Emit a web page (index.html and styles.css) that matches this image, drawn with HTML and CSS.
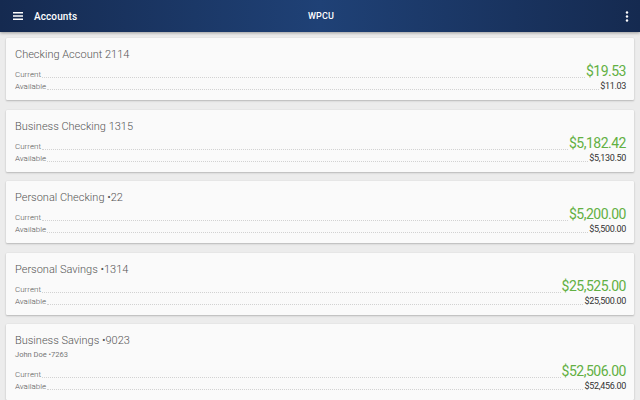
FILE: index.html
```html
<!DOCTYPE html>
<html>
<head>
<meta charset="utf-8">
<link rel="stylesheet" href="styles.css">
</head>
<body>
<header class="appbar">
  <div class="left">
    <svg class="menu" width="10" height="8" viewBox="0 0 10 8"><rect x="0" y="0" width="10" height="1.5" fill="#fff"/><rect x="0" y="3.25" width="10" height="1.5" fill="#fff"/><rect x="0" y="6.5" width="10" height="1.5" fill="#fff"/></svg>
    <span class="title">Accounts</span>
  </div>
  <span class="brand">WPCU</span>
  <div class="right">
    <svg class="kebab" width="4" height="11" viewBox="0 0 4 11"><circle cx="2" cy="1.5" r="1.2" fill="#fff"/><circle cx="2" cy="5.5" r="1.2" fill="#fff"/><circle cx="2" cy="9.5" r="1.2" fill="#fff"/></svg>
  </div>
</header>
<main class="list">
  <section class="card">
    <div class="name">Checking Account 2114</div>
    <div class="row cur"><span class="lbl">Current</span><span class="dots"></span><span class="amt">$19.53</span></div>
    <div class="row avl"><span class="lbl">Available</span><span class="dots"></span><span class="val">$11.03</span></div>
  </section>
  <section class="card">
    <div class="name">Business Checking 1315</div>
    <div class="row cur"><span class="lbl">Current</span><span class="dots"></span><span class="amt">$5,182.42</span></div>
    <div class="row avl"><span class="lbl">Available</span><span class="dots"></span><span class="val">$5,130.50</span></div>
  </section>
  <section class="card">
    <div class="name">Personal Checking •22</div>
    <div class="row cur"><span class="lbl">Current</span><span class="dots"></span><span class="amt">$5,200.00</span></div>
    <div class="row avl"><span class="lbl">Available</span><span class="dots"></span><span class="val">$5,500.00</span></div>
  </section>
  <section class="card">
    <div class="name">Personal Savings •1314</div>
    <div class="row cur"><span class="lbl">Current</span><span class="dots"></span><span class="amt">$25,525.00</span></div>
    <div class="row avl"><span class="lbl">Available</span><span class="dots"></span><span class="val">$25,500.00</span></div>
  </section>
  <section class="card">
    <div class="name">Business Savings •9023</div>
    <div class="sub">John Doe •7263</div>
    <div class="row cur"><span class="lbl">Current</span><span class="dots"></span><span class="amt">$52,506.00</span></div>
    <div class="row avl"><span class="lbl">Available</span><span class="dots"></span><span class="val">$52,456.00</span></div>
  </section>
</main>
</body>
</html>
```
FILE: styles.css
```css
* { box-sizing: border-box; }
html, body { margin: 0; padding: 0; }
body {
  width: 640px;
  height: 400px;
  overflow: hidden;
  background: #ececec;
  font-family: Roboto, "Liberation Sans", sans-serif;
}
.appbar {
  height: 32px;
  display: flex;
  align-items: center;
  justify-content: space-between;
  padding: 0 11px 0 13px;
  background: linear-gradient(90deg, #152a50 0%, #1f4176 50%, #152a50 100%);
  box-shadow: 0 1px 3px rgba(0,0,0,0.35);
  position: relative;
  color: #fff;
}
.left { display: flex; align-items: center; width: 200px; }
.right { width: 200px; display: flex; justify-content: flex-end; }
.menu { margin-right: 11px; }
.title { font-size: 10px; font-weight: 500; letter-spacing: 0.1px; }
.brand { font-size: 9px; font-weight: 500; letter-spacing: 0.2px; }
.list {
  padding: 6px 6px 0 6px;
  display: flex;
  flex-direction: column;
  gap: 9.5px;
}
.card {
  background: #fafafa;
  box-shadow: 0 1px 2px rgba(0,0,0,0.22), 0 0 1px rgba(0,0,0,0.12);
  border-radius: 1px;
  padding: 10px 8px 8px 9px;
  height: 62px;
}
.card:last-child { height: auto; }
.name {
  font-size: 11px;
  font-weight: 300;
  color: #555;
  line-height: 14px;
}
.sub {
  font-size: 7.5px;
  color: #777;
  line-height: 11px;
  margin-top: 1px;
  margin-bottom: 3px;
}
.row {
  display: flex;
  align-items: flex-end;
}
.cur { height: 17px; margin-top: 1px; }
.avl { height: 12px; }
.lbl {
  font-size: 8px;
  font-weight: 300;
  color: #555;
  line-height: 10px;
}
.dots {
  flex: 1;
  border-bottom: 1px dotted #d2d2d2;
  margin: 0 1px 2px 1px;
}
.amt {
  font-size: 14px;
  color: #62b043;
  letter-spacing: -0.5px;
  line-height: 17px;
}
.val {
  font-size: 9px;
  color: #333;
  letter-spacing: -0.3px;
  line-height: 11px;
}
```
